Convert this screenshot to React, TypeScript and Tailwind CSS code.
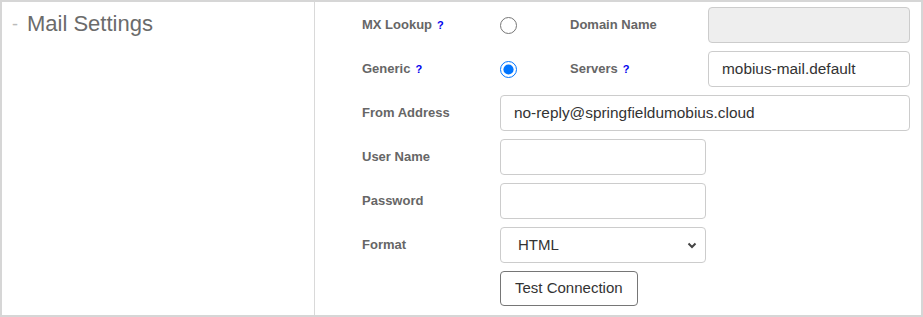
import { useState } from "react";

function Help() {
  return <span className="ml-[5px] text-[11px] font-bold text-[#0000ee]">?</span>;
}

const labelCls = "w-[138px] shrink-0 text-[13px] font-bold text-[#666]";
const inputCls =
  "h-9 shrink-0 rounded-[4px] border border-[#ccc] px-[13px] text-[15.4px] text-[#333] outline-none";

export default function App() {
  const [mode, setMode] = useState<string>("generic");
  const [servers, setServers] = useState<string>("mobius-mail.default");
  const [from, setFrom] = useState<string>("no-reply@springfieldumobius.cloud");
  const [user, setUser] = useState<string>("");
  const [pass, setPass] = useState<string>("");
  const [format, setFormat] = useState<string>("HTML");

  return (
    <div
      className="flex h-[317px] w-[923px] border-2 border-[#d6d6d6] bg-white"
      style={{ fontFamily: '"Liberation Sans", Arial, sans-serif' }}
    >
      <div className="w-[313px] shrink-0 border-r border-[#d9d9d9] pl-[10px] pt-[9px]">
        <div className="flex items-center text-[22px] leading-[26px] text-[#6b6b6b]">
          <span className="mr-[9px] text-[18px] text-[#bbb]">-</span>
          Mail Settings
        </div>
      </div>

      <div className="flex min-w-0 flex-1 flex-col gap-2 pl-[47px] pt-[5px]">
        {/* row 1 */}
        <div className="flex h-9 items-center">
          <div className={labelCls}>
            MX Lookup
            <Help />
          </div>
          <div className="flex w-[70px] shrink-0 items-center">
            <input
              type="radio"
              name="mode"
              className="m-0 h-[17px] w-[17px]"
              checked={mode === "mx"}
              onChange={() => setMode("mx")}
            />
          </div>
          <div className={labelCls}>Domain Name</div>
          <input className={inputCls + " w-[202px] bg-[#eee]"} disabled />
        </div>

        {/* row 2 */}
        <div className="flex h-9 items-center">
          <div className={labelCls}>
            Generic
            <Help />
          </div>
          <div className="flex w-[70px] shrink-0 items-center">
            <input
              type="radio"
              name="mode"
              className="m-0 h-[17px] w-[17px]"
              checked={mode === "generic"}
              onChange={() => setMode("generic")}
            />
          </div>
          <div className={labelCls}>
            Servers
            <Help />
          </div>
          <input
            className={inputCls + " w-[202px] bg-white"}
            value={servers}
            onChange={(e) => setServers(e.target.value)}
          />
        </div>

        <div className="flex h-9 items-center">
          <div className={labelCls}>From Address</div>
          <input
            className={inputCls + " w-[410px] bg-white"}
            value={from}
            onChange={(e) => setFrom(e.target.value)}
          />
        </div>

        <div className="flex h-9 items-center">
          <div className={labelCls}>User Name</div>
          <input
            className={inputCls + " w-[206px] bg-white"}
            value={user}
            onChange={(e) => setUser(e.target.value)}
          />
        </div>

        <div className="flex h-9 items-center">
          <div className={labelCls}>Password</div>
          <input
            type="password"
            className={inputCls + " w-[206px] bg-white"}
            value={pass}
            onChange={(e) => setPass(e.target.value)}
          />
        </div>

        <div className="flex h-9 items-center">
          <div className={labelCls}>Format</div>
          <div className="relative w-[206px]">
            <select
              className="h-9 w-full appearance-none rounded-[4px] border border-[#ccc] bg-white pl-[17px] text-[15px] text-[#333] outline-none"
              value={format}
              onChange={(e) => setFormat(e.target.value)}
            >
              <option>HTML</option>
              <option>Text</option>
            </select>
            <svg
              className="pointer-events-none absolute right-[9px] top-[15px]"
              width="10"
              height="7"
              viewBox="0 0 10 7"
            >
              <path d="M1.5 1.5 L5 5 L8.5 1.5" fill="none" stroke="#444" strokeWidth="2" />
            </svg>
          </div>
        </div>

        <div className="flex items-center">
          <div className="w-[138px] shrink-0" />
          <button className="h-[35px] rounded-[4px] border border-[#767676] bg-white px-[14px] text-[15px] text-[#333]">
            Test Connection
          </button>
        </div>
      </div>
    </div>
  );
}
